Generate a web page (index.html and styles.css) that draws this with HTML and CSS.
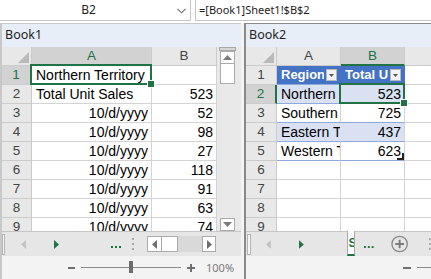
FILE: index.html
```html
<!DOCTYPE html>
<html>
<head>
<meta charset="utf-8">
<title>Excel windows</title>
<link rel="stylesheet" href="styles.css">
</head>
<body>
<div class="app">
  <div class="fbar">
    <div class="namebox">
      <span class="nb-text">B2</span>
      <svg class="chev" width="9" height="6" viewBox="0 0 9 6"><path d="M0.5 0.8 L4.5 4.8 L8.5 0.8" fill="none" stroke="#6a6a6a" stroke-width="1.1"/></svg>
    </div>
    <div class="fx">=[Book1]Sheet1!$B$2</div>
  </div>
  <div class="wins">
    <section class="win w1">
      <div class="title">Book1</div>
      <div class="body">
        <div class="grid g1">
          <div class="c h corner"><svg width="11" height="11" viewBox="0 0 11 11"><path d="M11 0 L11 11 L0 11Z" fill="#b9b9b9"/></svg></div>
          <div class="c h hs hs-col">A</div>
          <div class="c h">B</div>

          <div class="c h rh hs hs-row">1</div>
          <div class="c sel">Northern Territory</div>
          <div class="c"></div>

          <div class="c h rh">2</div>
          <div class="c">Total Unit Sales</div>
          <div class="c r">523</div>

          <div class="c h rh">3</div><div class="c r">10/d/yyyy</div><div class="c r">52</div>
          <div class="c h rh">4</div><div class="c r">10/d/yyyy</div><div class="c r">98</div>
          <div class="c h rh">5</div><div class="c r">10/d/yyyy</div><div class="c r">27</div>
          <div class="c h rh">6</div><div class="c r">10/d/yyyy</div><div class="c r">118</div>
          <div class="c h rh">7</div><div class="c r">10/d/yyyy</div><div class="c r">91</div>
          <div class="c h rh">8</div><div class="c r">10/d/yyyy</div><div class="c r">63</div>
          <div class="c h rh">9</div><div class="c r">10/d/yyyy</div><div class="c r">74</div>
        </div>
        <div class="vscroll">
          <div class="vs-grip"></div>
          <div class="sb-btn"><svg width="9" height="5" viewBox="0 0 9 5"><path d="M0 5 L4.5 0 L9 5Z" fill="#7a7a7a"/></svg></div>
          <div class="sb-thumb-v"></div>
          <div class="vs-track"></div>
          <div class="sb-btn"><svg width="9" height="5" viewBox="0 0 9 5"><path d="M0 0 L4.5 5 L9 0Z" fill="#7a7a7a"/></svg></div>
        </div>
      </div>
      <div class="tabs t1">
        <div class="split"></div>
        <svg class="nav-l" width="6" height="9" viewBox="0 0 6 9"><path d="M5 0 L0 4.5 L5 9Z" fill="#c2c2c2"/></svg>
        <svg class="nav-r" width="6" height="9" viewBox="0 0 6 9"><path d="M0 0 L5 4.5 L0 9Z" fill="#217346"/></svg>
        <svg class="more m1" width="10" height="3" viewBox="0 0 10 3"><rect x="0" y="0" width="2" height="2" fill="#217346"/><rect x="4" y="0" width="2" height="2" fill="#217346"/><rect x="8" y="0" width="2" height="2" fill="#217346"/></svg>
        <svg class="dsep" width="2" height="13" viewBox="0 0 2 13"><rect x="0" y="0" width="2" height="2" fill="#a8a8a8"/><rect x="0" y="5" width="2" height="2" fill="#a8a8a8"/><rect x="0" y="10" width="2" height="2" fill="#a8a8a8"/></svg>
        <div class="hscroll">
          <div class="hs-btn"><svg width="5" height="9" viewBox="0 0 5 9"><path d="M5 0 L0 4.5 L5 9Z" fill="#6e6e6e"/></svg></div>
          <div class="hs-thumb"></div>
          <div class="hs-track"></div>
          <div class="hs-btn"><svg width="5" height="9" viewBox="0 0 5 9"><path d="M0 0 L5 4.5 L0 9Z" fill="#6e6e6e"/></svg></div>
        </div>
      </div>
      <div class="status s1">
        <span class="zminus"></span>
        <div class="zslider"><span class="zthumb"></span></div>
        <svg class="zplus" width="8" height="8" viewBox="0 0 8 8"><path d="M0 4 H8 M4 0 V8" stroke="#6e6e6e" stroke-width="2"/></svg>
        <span class="zpct">100%</span>
      </div>
    </section>

    <section class="win w2">
      <div class="title">Book2</div>
      <div class="body">
        <div class="grid g2">
          <div class="c h corner"><svg width="11" height="11" viewBox="0 0 11 11"><path d="M11 0 L11 11 L0 11Z" fill="#b9b9b9"/></svg></div>
          <div class="c h">A</div>
          <div class="c h hs hs-col">B</div>
          <div class="c h"></div>

          <div class="c h rh">1</div>
          <div class="c th"><span class="tht">Region</span><span class="flt"><svg width="5" height="3" viewBox="0 0 5 3"><path d="M0 0 L5 0 L2.5 3Z" fill="#555"/></svg></span></div>
          <div class="c th"><span class="tht">Total Unit Sales</span><span class="flt"><svg width="5" height="3" viewBox="0 0 5 3"><path d="M0 0 L5 0 L2.5 3Z" fill="#555"/></svg></span></div>
          <div class="c"></div>

          <div class="c h rh hs hs-row">2</div>
          <div class="c tb band">Northern Territory</div>
          <div class="c tb band r sel">523</div>
          <div class="c"></div>

          <div class="c h rh">3</div>
          <div class="c tb">Southern</div>
          <div class="c tb r">725</div>
          <div class="c"></div>

          <div class="c h rh">4</div>
          <div class="c tb band">Eastern Territory</div>
          <div class="c tb band r">437</div>
          <div class="c"></div>

          <div class="c h rh">5</div>
          <div class="c tb">Western Territory</div>
          <div class="c tb r tend">623</div>
          <div class="c"></div>

          <div class="c h rh">6</div><div class="c"></div><div class="c"></div><div class="c"></div>
          <div class="c h rh">7</div><div class="c"></div><div class="c"></div><div class="c"></div>
          <div class="c h rh">8</div><div class="c"></div><div class="c"></div><div class="c"></div>
          <div class="c h rh">9</div><div class="c"></div><div class="c"></div><div class="c"></div>
        </div>
      </div>
      <div class="tabs t2">
        <div class="split"></div>
        <svg class="nav-l" width="6" height="9" viewBox="0 0 6 9"><path d="M5 0 L0 4.5 L5 9Z" fill="#c2c2c2"/></svg>
        <svg class="nav-r" width="6" height="9" viewBox="0 0 6 9"><path d="M0 0 L5 4.5 L0 9Z" fill="#217346"/></svg>
        <div class="stab">Sheet1</div>
        <svg class="more m2" width="10" height="3" viewBox="0 0 10 3"><rect x="0" y="0" width="2" height="2" fill="#217346"/><rect x="4" y="0" width="2" height="2" fill="#217346"/><rect x="8" y="0" width="2" height="2" fill="#217346"/></svg>
        <svg class="addsheet" width="18" height="18" viewBox="0 0 18 18"><circle cx="9" cy="9" r="8" fill="none" stroke="#8a8a8a" stroke-width="1.4"/><path d="M4.5 9 H13.5 M9 4.5 V13.5" stroke="#7a7a7a" stroke-width="2"/></svg>
        <svg class="dsep d2" width="2" height="13" viewBox="0 0 2 13"><rect x="0" y="0" width="2" height="2" fill="#a8a8a8"/><rect x="0" y="5" width="2" height="2" fill="#a8a8a8"/><rect x="0" y="10" width="2" height="2" fill="#a8a8a8"/></svg>
      </div>
      <div class="status s2">
        <span class="zminus"></span>
        <div class="zslider z2"></div>
      </div>
    </section>
  </div>
</div>
</body>
</html>
```

FILE: styles.css
```css
* { box-sizing: border-box; }
html, body { margin: 0; padding: 0; }
body {
  width: 431px; height: 279px; overflow: hidden;
  background: #fff;
  font-family: "Noto Sans", "DejaVu Sans", sans-serif;
  color: #000;
}
.app { display: flex; flex-direction: column; height: 279px; }

/* formula bar */
.fbar { flex: 0 0 23px; height: 23px; display: flex; align-items: flex-start; gap: 4px; background: #fff; }
.namebox {
  width: 191px; height: 21px;
  border-right: 1px solid #c6c6c6; border-bottom: 1px solid #c6c6c6;
  display: flex; align-items: center;
  font-size: 12px; color: #1e1e1e;
}
.nb-text { width: 177px; text-align: center; line-height: 20px; }
.chev { margin-top: 1px; }
.fx {
  flex: 1; height: 21px;
  border-left: 1px solid #c6c6c6; border-bottom: 1px solid #c6c6c6;
  padding-left: 3px; font-size: 11px; line-height: 20px; white-space: nowrap; color: #1e1e1e;
}

/* windows */
.wins { flex: 1; display: flex; gap: 3px; background: #f3f3f3; min-height: 0; }
.win {
  display: flex; flex-direction: column;
  border-top: 1px solid #c8c8c8; border-left: 2px solid #c8c8c8;
  overflow: hidden; background: #fff;
}
.w1 { flex: 0 0 241px; width: 241px; }
.w2 { flex: 1; border-top-color: #8a8a8a; border-left-color: #8a8a8a; }
.title {
  flex: 0 0 23px; height: 23px; background: #e7eef7;
  font-size: 12.5px; line-height: 22px; padding-left: 3px; color: #1e1e1e;
}
.body { flex: 0 0 184px; height: 184px; display: flex; overflow: hidden; }

/* grid */
.grid {
  display: grid; grid-auto-rows: 19px; align-content: start; flex: 0 0 auto;
  font-family: "Liberation Sans", Arial, sans-serif; font-size: 14px;
}
.g1 { grid-template-columns: 30px 120px 65px; }
.g2 { grid-template-columns: 31px 64px 64px 64px; }
.c {
  border-right: 1px solid #d4d4d4; border-bottom: 1px solid #d4d4d4;
  padding: 0 3px 0 4px; line-height: 18px; white-space: nowrap; overflow: hidden;
}
.r { text-align: right; }
.h {
  background: #e8e8e8; color: #444; text-align: center; padding: 0;
  border-color: #cbcbcb; font-size: 13.5px;
}
.corner { display: flex; align-items: flex-end; justify-content: flex-end; padding: 0 2px 2px 0; }
.hs { background: #d2d2d2; color: #217346; }
.hs-col { border-bottom: 2px solid #217346; line-height: 17px; }
.hs-row { border-right: 2px solid #217346; }

.sel { position: relative; overflow: visible; z-index: 2; }
.sel::after {
  content: ""; position: absolute; left: -2px; top: -2px; right: -1px; bottom: -1px;
  border: 2px solid #217346;
}
.sel::before {
  content: ""; position: absolute; right: -4px; bottom: -4px; width: 6px; height: 6px;
  background: #217346; border: 1px solid #fff; z-index: 1;
}

/* table */
.th {
  background: #4472c4; color: #fff; font-weight: bold; font-size: 13px;
  border-right-color: #4472c4; border-bottom-color: #8ea9db;
  display: flex; align-items: center; gap: 2px; padding: 0 3px 0 4px;
}
.tht { flex: 1; min-width: 0; overflow: hidden; line-height: 18px; }
.flt {
  flex: 0 0 11px; width: 11px; height: 12px; background: #f3f3f3; border: 1px solid #b8b8b8;
  display: flex; align-items: center; justify-content: center;
}
.tb { border-bottom-color: #8ea9db; }
.band { background: #d9e1f2; border-right-color: #d9e1f2; }
.band.r { border-right-color: #d4d4d4; }
.tend { position: relative; overflow: visible; }
.tend::after {
  content: ""; position: absolute; right: 0; bottom: 0; width: 5px; height: 5px;
  border-right: 2px solid #222; border-bottom: 2px solid #222;
}

/* vertical scrollbar */
.vscroll {
  flex: 0 0 24px; width: 24px; background: #e9e9e9;
  display: flex; flex-direction: column; align-items: flex-start; padding-left: 3px;
}
.vs-grip { width: 17px; height: 4px; border: 1px solid #a8a8a8; background: #d6d6d6; margin-left: -1px; }
.sb-btn {
  width: 15px; height: 13px; background: #fff; border: 1px solid #ababab;
  display: flex; align-items: center; justify-content: center;
}
.sb-thumb-v { width: 15px; height: 20px; background: #fff; border: 1px solid #ababab; border-top: 0; }
.vs-track { flex: 1; }

/* sheet tab bars */
.tabs {
  flex: 0 0 25px; height: 25px; background: #e6e6e6; border-top: 1px solid #c6c6c6;
  display: flex; align-items: center;
}
.split { width: 4px; height: 21px; border: 1px solid #b4b4b4; background: #f4f4f4; margin-left: 1px; }
.t1 .split { margin-left: 0; width: 3px; }
.nav-l { margin-left: 16px; }
.nav-r { margin-left: 27px; }
.m1 { margin-left: 51px; margin-top: 7px; }
.dsep { margin-left: 11px; }
.hscroll { display: flex; margin-left: 13px; height: 16px; }
.hs-btn {
  width: 15px; height: 16px; background: #fff; border: 1px solid #ababab;
  display: flex; align-items: center; justify-content: center;
}
.hs-thumb { width: 16px; height: 16px; background: #fff; border: 1px solid #ababab; border-left: 0; }
.hs-track { width: 24px; height: 16px; background: #d9d9d9; }
.hscroll .hs-btn:last-child { width: 14px; }

.t2 .nav-l { margin-left: 15px; }
.t2 .nav-r { margin-left: 27px; }
.stab {
  margin-left: 43px; width: 8px; height: 25px; align-self: flex-start; margin-top: -1px;
  background: #fff; border-left: 1px solid #a8a8a8; border-right: 1px solid #a8a8a8;
  border-bottom: 2px solid #217346;
  overflow: hidden; white-space: nowrap;
  font-family: "Liberation Sans", Arial, sans-serif; font-weight: bold; font-size: 12px;
  color: #217346; line-height: 24px; padding-left: 0;
}
.m2 { margin-left: 9px; margin-top: 7px; }
.addsheet { margin-left: 17px; }
.d2 { margin-left: 21px; }

/* status bars */
.status {
  flex: 0 0 23px; height: 23px; background: #f3f3f3;
  display: flex; align-items: center;
}
.zminus { width: 7px; height: 2px; background: #6e6e6e; margin-left: 66px; }
.zslider { position: relative; width: 100px; height: 1px; background: #8c8c8c; margin-left: 6px; }
.zthumb { position: absolute; left: 48px; top: -6px; width: 4px; height: 12px; background: #6e6e6e; }
.zplus { margin-left: 6px; }
.zpct { margin-left: 11px; font-size: 11px; color: #7a7a7a; }
.s2 .zminus { margin-left: 157px; width: 8px; }
.z2 { flex: 1; margin-left: 6px; }
```
